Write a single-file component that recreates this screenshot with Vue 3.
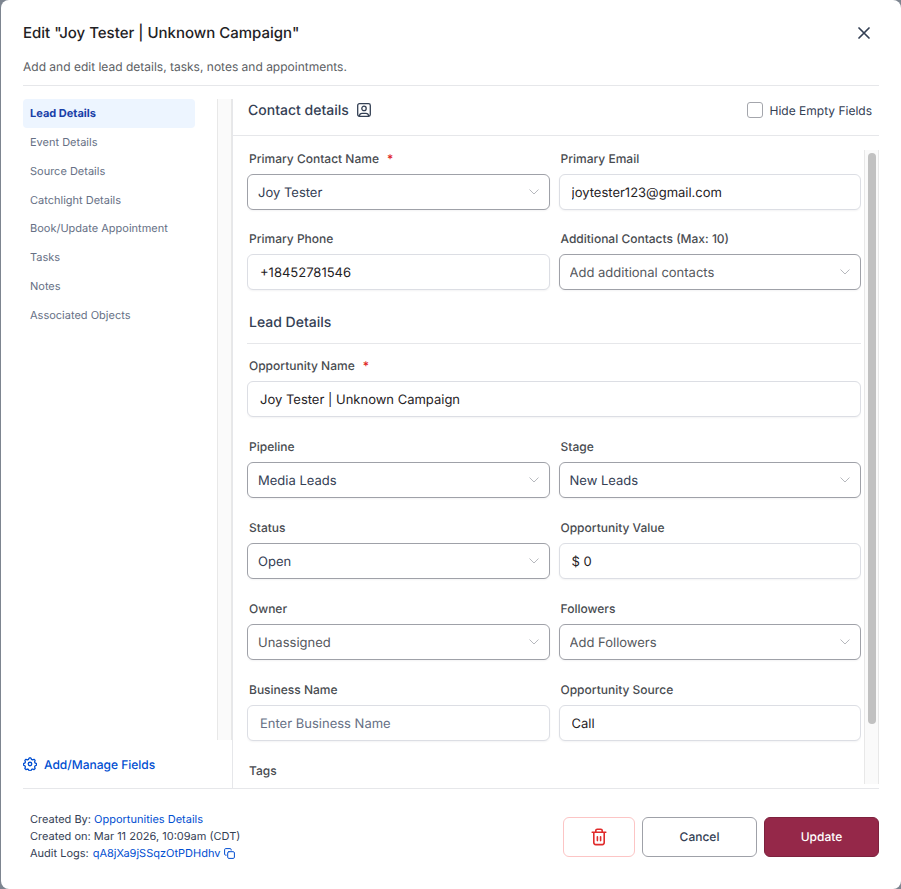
<template>
  <main class="modal">
    <header class="modal-header">
      <div class="title-row">
        <h1>Edit "{{ form.name }}"</h1>
        <button type="button" class="close-btn" aria-label="Close">
          <svg width="12" height="12" viewBox="0 0 12 12" fill="none" stroke="currentColor" stroke-width="1.7" stroke-linecap="round">
            <path d="M1 1l10 10M11 1L1 11" />
          </svg>
        </button>
      </div>
      <p>Add and edit lead details, tasks, notes and appointments.</p>
    </header>

    <div class="modal-body">
      <aside class="sidebar">
        <div class="sidebar-scroll">
          <nav class="tabs">
            <a
              v-for="tab in tabs"
              :key="tab"
              href="#"
              class="tab"
              :class="{ active: tab === activeTab }"
              @click.prevent="activeTab = tab"
            >{{ tab }}</a>
          </nav>
          <div class="track"></div>
        </div>
        <a href="#" class="manage-link">
          <svg width="14" height="14" viewBox="0 0 24 24" fill="none" stroke="currentColor" stroke-width="2.2" stroke-linecap="round" stroke-linejoin="round">
            <circle cx="12" cy="12" r="3" />
            <path d="M9.4 4.1 10.6 1.6h2.8l1.2 2.5 1.6.7 2.7-.9 1.9 1.9-.9 2.7.7 1.6 2.5 1.2v2.8l-2.5 1.2-.7 1.6.9 2.7-1.9 1.9-2.7-.9-1.6.7-1.2 2.5h-2.8l-1.2-2.5-1.6-.7-2.7.9-1.9-1.9.9-2.7-.7-1.6-2.5-1.2v-2.8l2.5-1.2.7-1.6-.9-2.7 1.9-1.9 2.7.9z" />
          </svg>
          Add/Manage Fields
        </a>
      </aside>

      <section class="content">
        <div class="content-header">
          <h2>
            Contact details
            <svg width="14" height="14" viewBox="0 0 14 14" fill="none" stroke="currentColor" stroke-width="1.3" stroke-linecap="round" stroke-linejoin="round">
              <rect x="0.7" y="0.7" width="12.6" height="12.6" rx="1.8" />
              <circle cx="7" cy="5.4" r="2.2" />
              <path d="M2.4 13c.2-1.8 1-2.7 2.6-2.7h4c1.6 0 2.4.9 2.6 2.7" />
            </svg>
          </h2>
          <label class="hide-empty">
            <input v-model="hideEmpty" type="checkbox" />
            Hide Empty Fields
          </label>
        </div>

        <div class="scroll-area">
          <form class="form" @submit.prevent>
            <template v-for="section in sections" :key="section.id">
              <h3 v-if="section.title">{{ section.title }}</h3>
              <div class="fields" :class="section.id">
                <div v-for="field in section.fields" :key="field.key" class="field" :class="{ wide: field.wide }">
                  <label :for="field.key">
                    {{ field.label }}<span v-if="field.required" class="required">*</span>
                  </label>
                  <div v-if="field.options" class="select-wrap">
                    <select :id="field.key" v-model="form[field.key]" :class="{ muted: field.muted }">
                      <option v-for="option in field.options" :key="option">{{ option }}</option>
                    </select>
                    <svg class="chevron" width="10" height="6" viewBox="0 0 10 6" fill="none" stroke="currentColor" stroke-linecap="round" stroke-linejoin="round">
                      <path d="M0.8 0.8 5 5l4.2-4.2" />
                    </svg>
                  </div>
                  <input v-else :id="field.key" v-model="form[field.key]" type="text" :placeholder="field.placeholder" />
                </div>
              </div>
            </template>
          </form>
          <div class="track form-track"><div class="thumb"></div></div>
        </div>
      </section>
    </div>

    <footer class="modal-footer">
      <div class="meta">
        <div>Created By: <a href="#">Opportunities Details</a></div>
        <div>Created on: Mar 11 2026, 10:09am (CDT)</div>
        <div class="audit">
          Audit Logs: <a href="#">qA8jXa9jSSqzOtPDHdhv</a>
          <button type="button" class="copy-btn" aria-label="Copy">
            <svg width="11" height="11" viewBox="0 0 11 11" fill="none" stroke="currentColor" stroke-linecap="round" stroke-linejoin="round">
              <rect x="3.7" y="3.7" width="6.7" height="6.7" rx="1.2" />
              <path d="M2.2 7.2h-.5A1.1 1.1 0 0 1 .6 6.1V1.7A1.1 1.1 0 0 1 1.7.6h4.4a1.1 1.1 0 0 1 1.1 1.1v.4" />
            </svg>
          </button>
        </div>
      </div>
      <div class="actions">
        <button type="button" class="btn btn-delete" aria-label="Delete">
          <svg width="16" height="18" viewBox="0 0 16 18" fill="none" stroke="currentColor" stroke-width="1.6" stroke-linecap="round" stroke-linejoin="round">
            <path d="M1.2 4.2h13.6M2.8 4.2v10.4a2 2 0 0 0 2 2h6.4a2 2 0 0 0 2-2V4.2M4.8 4V2.6a1.4 1.4 0 0 1 1.4-1.4h3.6a1.4 1.4 0 0 1 1.4 1.4V4M6.4 8.8v3.8M9.6 8.8v3.8" />
          </svg>
        </button>
        <button type="button" class="btn btn-cancel">Cancel</button>
        <button type="button" class="btn btn-update">Update</button>
      </div>
    </footer>
  </main>
</template>

<script setup>
import { reactive, ref } from 'vue'

const tabs = [
  'Lead Details',
  'Event Details',
  'Source Details',
  'Catchlight Details',
  'Book/Update Appointment',
  'Tasks',
  'Notes',
  'Associated Objects'
]
const activeTab = ref('Lead Details')
const hideEmpty = ref(false)

const form = reactive({
  contact: 'Joy Tester',
  email: 'joytester123@gmail.com',
  phone: '+18452781546',
  additional: 'Add additional contacts',
  name: 'Joy Tester | Unknown Campaign',
  pipeline: 'Media Leads',
  stage: 'New Leads',
  status: 'Open',
  value: '$ 0',
  owner: 'Unassigned',
  followers: 'Add Followers',
  business: '',
  source: 'Call',
  tags: ''
})

const sections = [
  {
    id: 'contact-fields',
    fields: [
      { key: 'contact', label: 'Primary Contact Name', required: true, options: ['Joy Tester'] },
      { key: 'email', label: 'Primary Email' },
      { key: 'phone', label: 'Primary Phone' },
      { key: 'additional', label: 'Additional Contacts (Max: 10)', options: ['Add additional contacts'], muted: true }
    ]
  },
  {
    id: 'lead-fields',
    title: 'Lead Details',
    fields: [
      { key: 'name', label: 'Opportunity Name', required: true, wide: true },
      { key: 'pipeline', label: 'Pipeline', options: ['Media Leads'] },
      { key: 'stage', label: 'Stage', options: ['New Leads'] },
      { key: 'status', label: 'Status', options: ['Open'] },
      { key: 'value', label: 'Opportunity Value' },
      { key: 'owner', label: 'Owner', options: ['Unassigned'], muted: true },
      { key: 'followers', label: 'Followers', options: ['Add Followers'], muted: true },
      { key: 'business', label: 'Business Name', placeholder: 'Enter Business Name' },
      { key: 'source', label: 'Opportunity Source' },
      { key: 'tags', label: 'Tags', wide: true }
    ]
  }
]
</script>

<style>
body { background: #7d8590; }
</style>

<style scoped>
.modal { display: flex; flex-direction: column; box-sizing: border-box; height: 100vh; margin-left: 1px; padding: 0 22px; background: #fff; border-radius: 8px; font-family: Inter, sans-serif; text-rendering: geometricPrecision; color: #344054; overflow: hidden; }
.modal *, .modal *::before { box-sizing: border-box; }
a { color: #004ed1; text-decoration: none; }
button, input, select { font-family: inherit; margin: 0; text-rendering: inherit; }
button { cursor: pointer; }

.modal-header { flex-shrink: 0; padding: 21px 0 8px; border-bottom: 1px solid #e6e7ea; }
.title-row { display: flex; justify-content: space-between; align-items: center; }
h1 { margin: 0; font-size: 15px; line-height: 24px; font-weight: 500; color: #1f2225; }
.close-btn { display: flex; padding: 6px 9px; border: 0; background: none; color: #344054; }
.modal-header p { margin: 12px 0 0; font-size: 12px; line-height: 20px; color: #5b5e63; }

.modal-body { display: flex; flex: 1; min-height: 0; padding-top: 13px; border-bottom: 1px solid #e6e7ea; }
.sidebar { display: flex; flex-direction: column; flex-shrink: 0; width: 210px; border-right: 1px solid #e6e7ea; }
.sidebar-scroll { display: flex; flex: 1; justify-content: space-between; }
.tabs { display: grid; grid-auto-rows: 1fr; width: 172px; height: 230px; }
.tab { display: flex; align-items: center; padding: 0 7px; border-radius: 4px; font-size: 11px; color: #667085; }
.tab.active { background: #edf5ff; color: #1940a8; font-weight: 700; }
.track { width: 15px; background: #fafafa; border: solid #e8e8e8; border-width: 0 1px; }
.manage-link { display: flex; align-items: center; gap: 7px; height: 48px; font-size: 12px; font-weight: 500; }

.content { display: flex; flex: 1; flex-direction: column; min-width: 0; }
.content-header { display: flex; flex-shrink: 0; justify-content: space-between; height: 37px; padding: 0 7px 14px 15px; border-bottom: 1px solid #e6e7ea; }
h2 { display: flex; align-items: center; gap: 8px; margin: 0; font-size: 14px; font-weight: 500; }
.hide-empty { display: flex; align-items: center; gap: 7px; font-size: 12px; }
.hide-empty input { appearance: none; width: 16px; height: 16px; border: 1px solid #a4a6ac; border-radius: 3px; background: #fff; }
.hide-empty input:checked { background: #004ed1; }

.scroll-area { display: flex; flex: 1; gap: 3px; min-height: 0; padding-left: 14px; }
.form { flex: 1; min-width: 0; padding-top: 14px; overflow-y: auto; scrollbar-width: none; }
.form-track { margin: 14px 0 4px; padding: 3px; }
.thumb { width: 8px; height: 91%; border-radius: 4px; background: #c1c1c1; }

.fields { display: grid; grid-template-columns: 1fr 1fr; gap: 21px 9px; }
.fields.contact-fields { row-gap: 20px; }
.wide { grid-column: 1 / -1; }
.field label { display: block; margin-bottom: 7px; padding-left: 2px; font-size: 12px; line-height: 17px; font-weight: 500; color: #484b50; }
.wide:last-child label { margin-bottom: 16px; }
.required { margin-left: 8px; color: #e02424; }
.field input, select { display: block; width: 100%; height: 36px; border: 1px solid #dcdee4; border-radius: 6px; background: #fff; box-shadow: 0 1px 2px rgba(16, 24, 40, 0.05); font-size: 13px; color: #1f2225; }
.field input { padding: 1px 12px 0; }
.field input::placeholder { color: #667085; opacity: 1; }
.field select { appearance: none; padding: 1px 32px 0 10px; border-color: #9fa1a8; color: #344054; }
.field select.muted { color: #55585d; }
.select-wrap { position: relative; }
.chevron { position: absolute; top: 15px; right: 11px; color: #b7b9be; pointer-events: none; }
h3 { margin: 20px 0 13px; padding: 0 2px 7px; border-bottom: 1px solid #e6e7ea; font-size: 14px; line-height: 26px; font-weight: 500; }

.modal-footer { display: flex; flex-shrink: 0; justify-content: space-between; align-items: center; padding: 22px 0 27px; }
.meta { padding-left: 7px; font-size: 11px; line-height: 17px; }
.audit { display: flex; align-items: center; gap: 4px; }
.copy-btn { display: flex; padding: 0; border: 0; background: none; color: #004ed1; }
.actions { display: flex; gap: 7px; }
.btn { display: flex; justify-content: center; align-items: center; width: 115px; height: 40px; border: 1px solid #9fa1a8; border-radius: 6px; background: #fff; font-size: 12px; font-weight: 500; color: #344054; }
.btn-delete { width: 72px; border-color: #fcc5c5; color: #e02b2b; }
.btn-update { border-color: #7d223e; background: #952849; color: #fff; }
</style>
